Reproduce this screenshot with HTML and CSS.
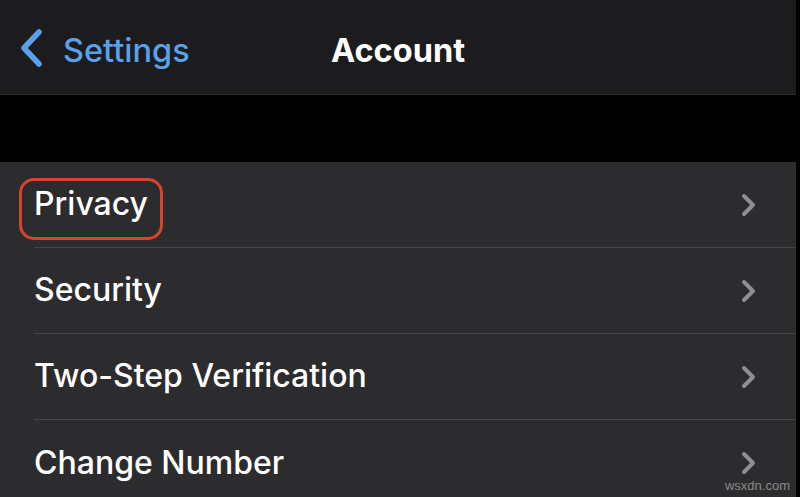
FILE: index.html
```html
<!DOCTYPE html>
<html>
<head>
<meta charset="utf-8">
<link rel="stylesheet" href="styles.css">
</head>
<body>
<div class="screen">
  <header class="nav">
    <div class="back">
      <svg class="back-icon" width="26" height="40" viewBox="0 0 26 40"><path d="M21 4 L6 20 L21 36" fill="none" stroke="#5aa0ea" stroke-width="5.5" stroke-linecap="round" stroke-linejoin="round"/></svg>
      <span class="back-label">Settings</span>
    </div>
    <h1 class="title">Account</h1>
  </header>
  <div class="gap"></div>
  <ul class="list">
    <li class="row"><span class="label highlighted">Privacy</span><svg class="chev" width="18" height="24" viewBox="0 0 18 24"><path d="M4 3 L13 12 L4 21" fill="none" stroke="#8e8e93" stroke-width="4" stroke-linecap="round" stroke-linejoin="round"/></svg></li>
    <li class="row"><span class="label">Security</span><svg class="chev" width="18" height="24" viewBox="0 0 18 24"><path d="M4 3 L13 12 L4 21" fill="none" stroke="#8e8e93" stroke-width="4" stroke-linecap="round" stroke-linejoin="round"/></svg></li>
    <li class="row"><span class="label">Two-Step Verification</span><svg class="chev" width="18" height="24" viewBox="0 0 18 24"><path d="M4 3 L13 12 L4 21" fill="none" stroke="#8e8e93" stroke-width="4" stroke-linecap="round" stroke-linejoin="round"/></svg></li>
    <li class="row"><span class="label">Change Number</span><svg class="chev" width="18" height="24" viewBox="0 0 18 24"><path d="M4 3 L13 12 L4 21" fill="none" stroke="#8e8e93" stroke-width="4" stroke-linecap="round" stroke-linejoin="round"/></svg></li>
  </ul>
</div>
<div class="watermark">wsxdn.com</div>
</body>
</html>
```
FILE: styles.css
```css
html, body {
  margin: 0;
  padding: 0;
  background: #000;
  width: 800px;
  height: 497px;
  overflow: hidden;
  font-family: Inter, "Liberation Sans", sans-serif;
}
.screen {
  width: 796px;
}
.nav {
  height: 94px;
  background: #1c1c1e;
  border-bottom: 1px solid #2a2a2c;
  display: flex;
  align-items: center;
  position: relative;
}
.back {
  display: flex;
  align-items: center;
  padding-left: 18px;
  gap: 19px;
  margin-top: 8px;
}
.back-icon { display: block; margin-top: -6px; }
.back-label {
  color: #5aa0ea;
  font-size: 32.5px;
  font-weight: 500;
  margin-top: -2px;
}
.title {
  position: absolute;
  left: 0;
  right: 0;
  top: 0;
  bottom: 0;
  margin: 0;
  display: flex;
  align-items: center;
  justify-content: center;
  color: #fff;
  font-size: 32.5px;
  font-weight: 700;
  padding-top: 6px;
  pointer-events: none;
}
.gap {
  height: 67px;
  background: #000;
}
.list {
  list-style: none;
  margin: 0;
  padding: 0 0 0 34px;
  background: #2c2c2e;
}
.row {
  box-sizing: border-box;
  height: 86px;
  display: flex;
  align-items: center;
  justify-content: space-between;
  padding-right: 38px;
  border-bottom: 1px solid #464649;
  position: relative;
}
.row:last-child { border-bottom: none; }
.label {
  color: #fff;
  font-size: 32px;
  font-weight: 500;
  padding-bottom: 2px;
}
.highlighted::before {
  content: "";
  position: absolute;
  left: -15px;
  top: 16px;
  width: 138px;
  height: 56px;
  border: 3px solid #d8432c;
  border-radius: 15px;
}
.chev { display: block; }
.watermark {
  position: absolute;
  right: 10px;
  bottom: 4px;
  color: #8a8a8a;
  font-size: 13px;
  font-family: "Liberation Sans", sans-serif;
}
```
